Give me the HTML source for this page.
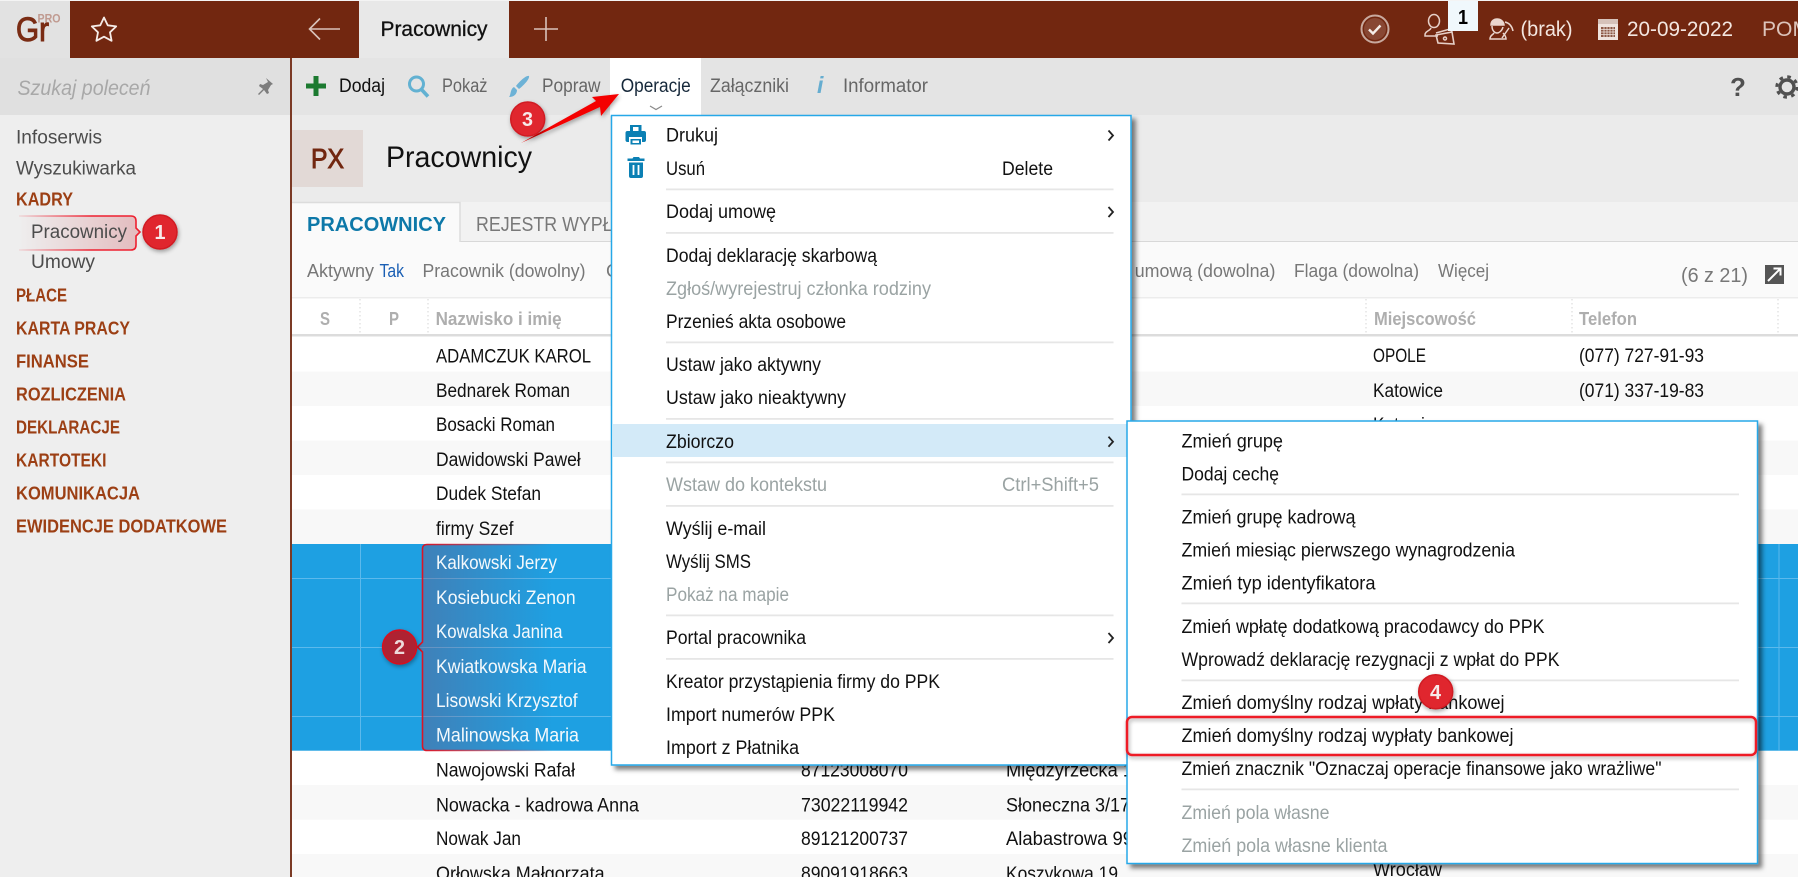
<!DOCTYPE html>
<html lang="pl"><head><meta charset="utf-8"><title>Pracownicy</title>
<style>
html,body{margin:0;padding:0;background:#fff;overflow:hidden}
svg{display:block}
text{font-family:"Liberation Sans",sans-serif;font-size:19px;fill:#111}
.g{fill:#9aa3a3}.s{fill:#4c4c4c}.h{font-size:18.5px;font-weight:bold;fill:#9c3f14}
.t{fill:#666}.f{fill:#777;font-size:18.5px}.c{fill:#aeaeae;font-weight:bold;font-size:18px}
.w{fill:#f4f9fc}.b{fill:#f3e6e0;font-size:21px}
</style></head><body>
<svg width="1798" height="877" viewBox="0 0 1798 877" xmlns="http://www.w3.org/2000/svg">
<defs>
<filter id="ms" x="-5%" y="-5%" width="112%" height="112%"><feDropShadow dx="4" dy="4" stdDeviation="2.5" flood-color="#000" flood-opacity=".5"/></filter>
<filter id="cs" x="-30%" y="-30%" width="170%" height="170%"><feDropShadow dx="1" dy="2" stdDeviation="2" flood-color="#000" flood-opacity=".35"/></filter>
<linearGradient id="g1" x1="0" x2="1" y1="0" y2="0"><stop offset="0" stop-color="#c83a44" stop-opacity="0"/><stop offset="1" stop-color="#c83a44" stop-opacity=".28"/></linearGradient>
<linearGradient id="g1s" x1="0" x2="1" y1="0" y2="0"><stop offset="0" stop-color="#ee2030" stop-opacity=".1"/><stop offset=".6" stop-color="#ee2030"/></linearGradient>
<linearGradient id="g2" x1="0" x2="1" y1="0" y2="0"><stop offset="0" stop-color="#7a4a70" stop-opacity=".38"/><stop offset="1" stop-color="#7a4a70" stop-opacity="0"/></linearGradient>
<linearGradient id="g2s" x1="0" x2="1" y1="0" y2="0"><stop offset="0" stop-color="#e01020"/><stop offset="1" stop-color="#e01020" stop-opacity="0"/></linearGradient>
</defs>

<!-- backgrounds -->
<rect width="1798" height="877" fill="#fff"/>
<rect x="0" y="0" width="290" height="877" fill="#eeeeee"/>
<rect x="0" y="0" width="70" height="58" fill="#e2e2e2"/>
<rect x="0" y="58" width="290" height="57" fill="#e0e0e0"/>
<rect x="70" y="1" width="1728" height="57" fill="#722710"/>
<rect x="359" y="1" width="150" height="57" fill="#e8e8e8"/>
<rect x="292" y="58" width="1506" height="57" fill="#e4e4e4"/>
<rect x="292" y="115" width="1506" height="87" fill="#ebebeb"/>
<rect x="292" y="202" width="1506" height="40" fill="#f2f2f2"/>
<rect x="292" y="241" width="1506" height="1.5" fill="#d8d8d8"/>
<rect x="292" y="242" width="1506" height="55" fill="#fafafa"/>
<rect x="292" y="297" width="1506" height="1.5" fill="#ececec"/>
<rect x="290" y="58" width="2" height="819" fill="#7b3a25"/>

<!-- logo -->
<text x="16" y="41" textLength="33" lengthAdjust="spacingAndGlyphs" style="font-size:34px;fill:#7a2c14;stroke:#7a2c14;stroke-width:1">Gr</text>
<text x="37.500" y="22.500" textLength="23" lengthAdjust="spacingAndGlyphs" style="font-size:12px;font-weight:bold;fill:#c09a90">PRO</text>
<!-- star -->
<path d="M104 17.500l3.700 7.800 8.500 1.100-6.200 5.900 1.600 8.500-7.600-4.100-7.600 4.100 1.600-8.500-6.200-5.900 8.500-1.100z" fill="none" stroke="#f5ece8" stroke-width="1.800" stroke-linejoin="round"/>
<!-- back arrow / plus -->
<path d="M340 29H310M320 18.500L309.500 29 320 39.500" fill="none" stroke="#d9c2ba" stroke-width="1.600"/>
<path d="M546 17V41M534 29H558" fill="none" stroke="#d9c2ba" stroke-width="1.600"/>
<text x="380.500" y="36" textLength="107" lengthAdjust="spacingAndGlyphs" style="font-size:21px;fill:#111;stroke:#111;stroke-width:.3">Pracownicy</text>

<!-- top right -->
<circle cx="1375" cy="29" r="13.500" fill="none" stroke="#c8a99e" stroke-width="2"/>
<circle cx="1375" cy="29" r="11" fill="#9a6250" opacity=".55"/>
<path d="M1369 29.500l4 4 7.500-8" fill="none" stroke="#f6eeea" stroke-width="2.400"/>
<g fill="none" stroke="#e6cfc7" stroke-width="1.500">
<ellipse cx="1434" cy="21" rx="5.500" ry="6.500"/>
<path d="M1431 28c-1 3-6 3-6 7v1h13"/>
<path d="M1436 35l16-3 2 12-16-1z" stroke-width="1.600"/>
<path d="M1436 33l14-4 2 3"/>
<circle cx="1445" cy="38.500" r="1.500"/>
</g>
<rect x="1448" y="1" width="30" height="30" fill="#f0f8fc"/>
<text x="1458" y="24" textLength="10" lengthAdjust="spacingAndGlyphs" style="font-weight:bold;font-size:20px;fill:#000">1</text>
<g fill="none" stroke="#ead6ce" stroke-width="1.500">
<path d="M1491 25c0-8 12-8 13 0z" fill="#ead6ce"/>
<path d="M1492 26c0 5 3 7 5 7s5-2 6-6"/>
<path d="M1494 33c-1 2-4 2-4 6h16c0-2-1-4-3-6"/>
<path d="M1502 38l7-10M1505 22c4 1 7 4 8 9"/>
</g>
<text class="b" x="1520.500" y="36" textLength="52" lengthAdjust="spacingAndGlyphs">(brak)</text>
<rect x="1598" y="19" width="20" height="21" fill="#efe3de"/>
<rect x="1598" y="19" width="20" height="5" fill="#d6c2ba"/>
<g fill="#7a3f2b"><rect x="1601" y="27" width="14" height="10" opacity=".85"/></g>
<path d="M1601 29.500H1615M1601 32H1615M1601 34.500H1615M1604 27V37M1607 27V37M1610 27V37M1613 27V37" stroke="#efe3de" stroke-width=".8"/>
<text class="b" x="1627" y="36" textLength="106" lengthAdjust="spacingAndGlyphs">20-09-2022</text>
<text x="1762" y="36" textLength="48" lengthAdjust="spacingAndGlyphs" style="font-size:21px;fill:#dcc3ba">POM</text>

<!-- sidebar -->
<text x="17.500" y="95" textLength="133" lengthAdjust="spacingAndGlyphs" style="font-size:21px;font-style:italic;fill:#a8a8a8">Szukaj poleceń</text>
<path d="M266 79l7 6-2 1-3 5 1 3-2 1-3-4-5 5-1-1 5-5-4-3 1-2 3 1 5-3z" fill="#7d7d7d" transform="translate(0,-1)"/>
<text class="s" x="16" y="143.500" textLength="86" lengthAdjust="spacingAndGlyphs">Infoserwis</text>
<text class="s" x="16" y="174.500" textLength="120" lengthAdjust="spacingAndGlyphs">Wyszukiwarka</text>
<text class="h" x="16" y="205.500" textLength="57" lengthAdjust="spacingAndGlyphs">KADRY</text>
<path d="M19 216H131q5 0 5 5V228l4 4-4 4V245q0 5-5 5H19z" fill="url(#g1)"/>
<path d="M19 216H131q5 0 5 5V228l4 4-4 4V245q0 5-5 5H19" fill="none" stroke="url(#g1s)" stroke-width="1.600"/>
<text class="s" x="31" y="238" textLength="96" lengthAdjust="spacingAndGlyphs">Pracownicy</text>
<text class="s" x="31" y="268" textLength="64" lengthAdjust="spacingAndGlyphs">Umowy</text>
<text class="h" x="16" y="301.500" textLength="51" lengthAdjust="spacingAndGlyphs">PŁACE</text>
<text class="h" x="16" y="334.500" textLength="114" lengthAdjust="spacingAndGlyphs">KARTA PRACY</text>
<text class="h" x="16" y="367.500" textLength="73" lengthAdjust="spacingAndGlyphs">FINANSE</text>
<text class="h" x="16" y="400.500" textLength="110" lengthAdjust="spacingAndGlyphs">ROZLICZENIA</text>
<text class="h" x="16" y="433.500" textLength="104" lengthAdjust="spacingAndGlyphs">DEKLARACJE</text>
<text class="h" x="16" y="466.500" textLength="90.500" lengthAdjust="spacingAndGlyphs">KARTOTEKI</text>
<text class="h" x="16" y="499.500" textLength="124" lengthAdjust="spacingAndGlyphs">KOMUNIKACJA</text>
<text class="h" x="16" y="532.500" textLength="211" lengthAdjust="spacingAndGlyphs">EWIDENCJE DODATKOWE</text>

<!-- toolbar -->
<path d="M316 76V96M306 86H326" stroke="#1c7a30" stroke-width="5"/>
<text x="339" y="92" textLength="46" lengthAdjust="spacingAndGlyphs">Dodaj</text>
<circle cx="416.500" cy="84" r="7" fill="none" stroke="#62b1d2" stroke-width="3"/>
<path d="M421.500 89.500L428 96.500" stroke="#62b1d2" stroke-width="3.600"/>
<text class="t" x="442" y="92" textLength="45.500" lengthAdjust="spacingAndGlyphs">Pokaż</text>
<path d="M529 76c1 3-6 10-10 13l-3-3c3-4 10-11 13-10zM514 87l3 3c0 4-3 7-8 7 2-2 1-8 5-10z" fill="#6db2d6"/>
<text class="t" x="542" y="92" textLength="58.500" lengthAdjust="spacingAndGlyphs">Popraw</text>
<rect x="610" y="58" width="91" height="58" fill="#fff"/>
<text x="620.700" y="92" textLength="70" lengthAdjust="spacingAndGlyphs" style="fill:#16283a">Operacje</text>
<path d="M650 106l6 3.500 6-3.500" fill="none" stroke="#8a8a8a" stroke-width="1.200"/>
<text class="t" x="710" y="92" textLength="79" lengthAdjust="spacingAndGlyphs">Załączniki</text>
<text x="817" y="93" style="font-weight:bold;font-style:italic;font-size:23px;fill:#66add0">i</text>
<text class="t" x="843" y="92" textLength="85" lengthAdjust="spacingAndGlyphs">Informator</text>
<text x="1730" y="96" style="font-weight:bold;font-size:26px;fill:#505050">?</text>
<circle cx="1787" cy="87" r="7" fill="none" stroke="#505050" stroke-width="3.400"/>
<circle cx="1787" cy="87" r="10.200" fill="none" stroke="#505050" stroke-width="3" stroke-dasharray="3.600 4.400"/>

<!-- title -->
<rect x="292" y="130" width="71" height="57" fill="#e2d9d6"/>
<text x="311" y="168" textLength="33" lengthAdjust="spacingAndGlyphs" style="font-size:28px;fill:#722710;stroke:#722710;stroke-width:.9">PX</text>
<text x="386" y="167" textLength="146" lengthAdjust="spacingAndGlyphs" style="font-size:30px;fill:#111">Pracownicy</text>

<!-- tabs -->
<rect x="292" y="202" width="168" height="40" fill="#fafafa"/>
<path d="M292 202.500H460V242" fill="none" stroke="#dcdcdc" stroke-width="1.500"/>
<text x="307" y="231" textLength="139" lengthAdjust="spacingAndGlyphs" style="font-weight:bold;font-size:20px;fill:#0d78a8">PRACOWNICY</text>
<text x="476" y="231" textLength="158" lengthAdjust="spacingAndGlyphs" style="font-size:20px;fill:#787878">REJESTR WYPŁAT</text>

<!-- filters -->
<text class="f" x="307" y="277" textLength="67" lengthAdjust="spacingAndGlyphs">Aktywny</text>
<text x="379.500" y="277" textLength="24.500" lengthAdjust="spacingAndGlyphs" style="font-size:18.500px;fill:#1a5fb4">Tak</text>
<text class="f" x="422.500" y="277" textLength="163" lengthAdjust="spacingAndGlyphs">Pracownik (dowolny)</text>
<text class="f" x="606" y="277">Grupa</text>
<text class="f" x="1134.700" y="277" textLength="140.700" lengthAdjust="spacingAndGlyphs">umową (dowolna)</text>
<text class="f" x="1294" y="277" textLength="125" lengthAdjust="spacingAndGlyphs">Flaga (dowolna)</text>
<text class="f" x="1438" y="277" textLength="51" lengthAdjust="spacingAndGlyphs">Więcej</text>
<text x="1681" y="282" textLength="67" lengthAdjust="spacingAndGlyphs" style="font-size:20px;fill:#777">(6 z 21)</text>
<rect x="1765" y="265" width="19" height="19" fill="#555"/>
<path d="M1768 281L1780 269M1773.500 268.500H1780.500V275.500" fill="none" stroke="#fff" stroke-width="2"/>

<!-- table header -->
<rect x="292" y="298.500" width="1506" height="36" fill="#fff"/>
<rect x="292" y="334" width="1506" height="2.500" fill="#dcdcdc"/>
<path d="M360 299V334M428 299V334M1366 299V334M1572 299V334M1778 299V334" stroke="#d6d6d6" stroke-dasharray="1.500 2.500"/>
<text class="c" x="320" y="325" textLength="10" lengthAdjust="spacingAndGlyphs">S</text>
<text class="c" x="389" y="325" textLength="10" lengthAdjust="spacingAndGlyphs">P</text>
<text class="c" x="435.600" y="325" textLength="126" lengthAdjust="spacingAndGlyphs">Nazwisko i imię</text>
<text class="c" x="1374" y="325" textLength="102" lengthAdjust="spacingAndGlyphs">Miejscowość</text>
<text class="c" x="1579" y="325" textLength="58" lengthAdjust="spacingAndGlyphs">Telefon</text>

<!-- stripes -->
<g fill="#f8f8f8">
<rect x="292" y="371.500" width="1506" height="34.400"/>
<rect x="292" y="440.500" width="1506" height="34.400"/>
<rect x="292" y="509.400" width="1506" height="34.600"/>
<rect x="292" y="785" width="1506" height="34.700"/>
<rect x="292" y="854" width="1506" height="23"/>
</g>
<rect x="292" y="544" width="1506" height="206.700" fill="#1ea0e2"/>
<path d="M292 578.500H1798M292 647.500H1798M292 716.500H1798M360.500 544V750.700M1779 544V750.700" stroke="#5cb9ec" stroke-width="1"/>
<path d="M553 544.500H427q-4.500 0-4.500 4.500V642l-5 5 5 5V746q0 4.500 4.500 4.500H553z" fill="url(#g2)"/>
<path d="M553 544.500H427q-4.500 0-4.500 4.500V642l-5 5 5 5V746q0 4.500 4.500 4.500H553" fill="none" stroke="url(#g2s)" stroke-width="1.600"/>

<!-- table rows -->
<text x="436" y="362.500" textLength="155" lengthAdjust="spacingAndGlyphs">ADAMCZUK KAROL</text>
<text x="436" y="397" textLength="134" lengthAdjust="spacingAndGlyphs">Bednarek Roman</text>
<text x="436" y="431" textLength="119" lengthAdjust="spacingAndGlyphs">Bosacki Roman</text>
<text x="436" y="466" textLength="144.700" lengthAdjust="spacingAndGlyphs">Dawidowski Paweł</text>
<text x="436" y="500" textLength="105" lengthAdjust="spacingAndGlyphs">Dudek Stefan</text>
<text x="436" y="535" textLength="77.500" lengthAdjust="spacingAndGlyphs">firmy Szef</text>
<text class="w" x="436" y="569" textLength="121" lengthAdjust="spacingAndGlyphs">Kalkowski Jerzy</text>
<text class="w" x="436" y="604" textLength="139.600" lengthAdjust="spacingAndGlyphs">Kosiebucki Zenon</text>
<text class="w" x="436" y="638" textLength="126.500" lengthAdjust="spacingAndGlyphs">Kowalska Janina</text>
<text class="w" x="436" y="673" textLength="150.600" lengthAdjust="spacingAndGlyphs">Kwiatkowska Maria</text>
<text class="w" x="436" y="707" textLength="141.600" lengthAdjust="spacingAndGlyphs">Lisowski Krzysztof</text>
<text class="w" x="436" y="741.700" textLength="143" lengthAdjust="spacingAndGlyphs">Malinowska Maria</text>
<text x="436" y="776.700" textLength="139" lengthAdjust="spacingAndGlyphs">Nawojowski Rafał</text>
<text x="436" y="811.500" textLength="203" lengthAdjust="spacingAndGlyphs">Nowacka - kadrowa Anna</text>
<text x="436" y="845" textLength="85" lengthAdjust="spacingAndGlyphs">Nowak Jan</text>
<text x="436" y="880" textLength="168.600" lengthAdjust="spacingAndGlyphs">Orłowska Małgorzata</text>
<text x="801" y="776.700" textLength="107" lengthAdjust="spacingAndGlyphs">87123008070</text>
<text x="801" y="811.500" textLength="107" lengthAdjust="spacingAndGlyphs">73022119942</text>
<text x="801" y="845" textLength="107" lengthAdjust="spacingAndGlyphs">89121200737</text>
<text x="801" y="880" textLength="107" lengthAdjust="spacingAndGlyphs">89091918663</text>
<text x="1006" y="776.700" textLength="127" lengthAdjust="spacingAndGlyphs">Międzyrzecka 1</text>
<text x="1006" y="811.500" textLength="124" lengthAdjust="spacingAndGlyphs">Słoneczna 3/17</text>
<text x="1006" y="845" textLength="127" lengthAdjust="spacingAndGlyphs">Alabastrowa 99</text>
<text x="1006" y="880" textLength="112" lengthAdjust="spacingAndGlyphs">Koszykowa 19</text>
<text x="1373" y="362" textLength="53" lengthAdjust="spacingAndGlyphs">OPOLE</text>
<text x="1373" y="397" textLength="70" lengthAdjust="spacingAndGlyphs">Katowice</text>
<text x="1373" y="431" textLength="70" lengthAdjust="spacingAndGlyphs">Katowice</text>
<text x="1373" y="876" textLength="69" lengthAdjust="spacingAndGlyphs">Wrocław</text>
<text x="1579" y="362" textLength="125" lengthAdjust="spacingAndGlyphs">(077) 727-91-93</text>
<text x="1579" y="397" textLength="125" lengthAdjust="spacingAndGlyphs">(071) 337-19-83</text>

<!-- menu 1 -->
<rect x="611.500" y="115.500" width="519.500" height="649.500" fill="#fff" stroke="#28a8e8" stroke-width="1.500" filter="url(#ms)"/>
<rect x="613" y="424" width="514" height="33" fill="#d3eaf8"/>
<g fill="#e6e6e6">
<rect x="666" y="188.500" width="447.500" height="1.800"/><rect x="666" y="232" width="447.500" height="1.800"/><rect x="666" y="341.500" width="447.500" height="1.800"/><rect x="666" y="418" width="447.500" height="1.800"/><rect x="666" y="461.500" width="447.500" height="1.800"/><rect x="666" y="505" width="447.500" height="1.800"/><rect x="666" y="614.500" width="447.500" height="1.800"/><rect x="666" y="658" width="447.500" height="1.800"/>
</g>
<!-- printer -->
<path d="M630 125h11.500v7H630zM627.500 131h16.500q2 0 2 2v7q0 2-2 2h-2v-5h-13v5h-1.500q-2 0-2-2v-7q0-2 2-2zM630.500 139h10.500v5.500h-10.500z" fill="#0b80b4"/>
<rect x="633" y="127" width="5.500" height="4" fill="#fff"/><rect x="632.500" y="140.500" width="6.500" height="2.500" fill="#fff"/>
<!-- trash -->
<path d="M627.500 158.500h5l1-1.500h5.500l1 1.500h4.500v2.500h-17zM629 162.500h14v13.500q0 2-2 2h-10q-2 0-2-2z" fill="#0b80b4"/>
<path d="M633.500 165v10M638.500 165v10" stroke="#fff" stroke-width="1.800"/>
<!-- chevrons -->
<g fill="none" stroke="#222" stroke-width="1.800"><path d="M1108.500 130.500l4.500 5-4.500 5"/><path d="M1108.500 207l4.500 5-4.500 5"/><path d="M1108.500 436.700l4.500 5-4.500 5"/><path d="M1108.500 633l4.500 5-4.500 5"/></g>
<text x="666" y="141.700" textLength="52" lengthAdjust="spacingAndGlyphs">Drukuj</text>
<text x="666" y="175" textLength="39" lengthAdjust="spacingAndGlyphs">Usuń</text>
<text x="1002" y="175" textLength="51" lengthAdjust="spacingAndGlyphs">Delete</text>
<text x="666" y="218" textLength="110" lengthAdjust="spacingAndGlyphs">Dodaj umowę</text>
<text x="666" y="262" textLength="211" lengthAdjust="spacingAndGlyphs">Dodaj deklarację skarbową</text>
<text class="g" x="666" y="295" textLength="265" lengthAdjust="spacingAndGlyphs">Zgłoś/wyrejestruj członka rodziny</text>
<text x="666" y="328" textLength="180" lengthAdjust="spacingAndGlyphs">Przenieś akta osobowe</text>
<text x="666" y="371" textLength="155" lengthAdjust="spacingAndGlyphs">Ustaw jako aktywny</text>
<text x="666" y="404" textLength="180" lengthAdjust="spacingAndGlyphs">Ustaw jako nieaktywny</text>
<text x="666" y="448" textLength="68" lengthAdjust="spacingAndGlyphs">Zbiorczo</text>
<text class="g" x="666" y="491" textLength="161" lengthAdjust="spacingAndGlyphs">Wstaw do kontekstu</text>
<text class="g" x="1002" y="491" textLength="97" lengthAdjust="spacingAndGlyphs">Ctrl+Shift+5</text>
<text x="666" y="535" textLength="100" lengthAdjust="spacingAndGlyphs">Wyślij e-mail</text>
<text x="666" y="568" textLength="85" lengthAdjust="spacingAndGlyphs">Wyślij SMS</text>
<text class="g" x="666" y="601" textLength="123" lengthAdjust="spacingAndGlyphs">Pokaż na mapie</text>
<text x="666" y="644" textLength="140" lengthAdjust="spacingAndGlyphs">Portal pracownika</text>
<text x="666" y="688" textLength="274" lengthAdjust="spacingAndGlyphs">Kreator przystąpienia firmy do PPK</text>
<text x="666" y="721" textLength="169" lengthAdjust="spacingAndGlyphs">Import numerów PPK</text>
<text x="666" y="754" textLength="133" lengthAdjust="spacingAndGlyphs">Import z Płatnika</text>

<!-- menu 2 -->
<rect x="1127" y="421" width="630.500" height="442.500" fill="#fff" stroke="#28a8e8" stroke-width="1.500" filter="url(#ms)"/>
<g fill="#e6e6e6">
<rect x="1181.500" y="493.500" width="557.500" height="1.800"/><rect x="1181.500" y="602.500" width="557.500" height="1.800"/><rect x="1181.500" y="679.500" width="557.500" height="1.800"/><rect x="1181.500" y="788.500" width="557.500" height="1.800"/>
</g>
<text x="1181.500" y="447.700" textLength="101.500" lengthAdjust="spacingAndGlyphs">Zmień grupę</text>
<text x="1181.500" y="480.500" textLength="97.500" lengthAdjust="spacingAndGlyphs">Dodaj cechę</text>
<text x="1181.500" y="523.500" textLength="174" lengthAdjust="spacingAndGlyphs">Zmień grupę kadrową</text>
<text x="1181.500" y="556.500" textLength="333.500" lengthAdjust="spacingAndGlyphs">Zmień miesiąc pierwszego wynagrodzenia</text>
<text x="1181.500" y="589.500" textLength="194" lengthAdjust="spacingAndGlyphs">Zmień typ identyfikatora</text>
<text x="1181.500" y="633" textLength="363" lengthAdjust="spacingAndGlyphs">Zmień wpłatę dodatkową pracodawcy do PPK</text>
<text x="1181.500" y="666" textLength="378" lengthAdjust="spacingAndGlyphs">Wprowadź deklarację rezygnacji z wpłat do PPK</text>
<text x="1181.500" y="709" textLength="323" lengthAdjust="spacingAndGlyphs">Zmień domyślny rodzaj wpłaty bankowej</text>
<text x="1181.500" y="742" textLength="332" lengthAdjust="spacingAndGlyphs">Zmień domyślny rodzaj wypłaty bankowej</text>
<text x="1181.500" y="775" textLength="480" lengthAdjust="spacingAndGlyphs">Zmień znacznik "Oznaczaj operacje finansowe jako wrażliwe"</text>
<text class="g" x="1181.500" y="819" textLength="148" lengthAdjust="spacingAndGlyphs">Zmień pola własne</text>
<text class="g" x="1181.500" y="852" textLength="206" lengthAdjust="spacingAndGlyphs">Zmień pola własne klienta</text>

<!-- annotations -->
<polygon points="521,143 596,101 592,97 619,94 601,116 600,107" fill="#f40000" filter="url(#cs)"/>
<rect x="1127" y="717" width="629" height="38" rx="5" fill="none" stroke="#ee1c28" stroke-width="2.500" filter="url(#cs)"/>
<g filter="url(#cs)">
<circle cx="160" cy="232" r="17" fill="#e0272f" stroke="#d01a24" stroke-width="1.500"/>
<circle cx="399.600" cy="647" r="17" fill="#ae2433" stroke="#d8101e" stroke-width="1.500"/>
<circle cx="527.700" cy="119" r="17" fill="#e0272f" stroke="#d01a24" stroke-width="1.500"/>
<circle cx="1435.700" cy="691.700" r="17" fill="#e0272f" stroke="#d01a24" stroke-width="1.500"/>
</g>
<g>
<text x="154.500" y="239" textLength="11" lengthAdjust="spacingAndGlyphs" style="font-weight:bold;font-size:20px;fill:#f7eaea">1</text>
<text x="394" y="654" textLength="11" lengthAdjust="spacingAndGlyphs" style="font-weight:bold;font-size:20px;fill:#eddada">2</text>
<text x="522" y="126" textLength="11" lengthAdjust="spacingAndGlyphs" style="font-weight:bold;font-size:20px;fill:#f7eaea">3</text>
<text x="1430" y="699" textLength="11" lengthAdjust="spacingAndGlyphs" style="font-weight:bold;font-size:20px;fill:#f7eaea">4</text>
</g>
<rect x="0" y="0" width="1798" height="1" fill="#f4f4f4"/>
</svg>
</body></html>
